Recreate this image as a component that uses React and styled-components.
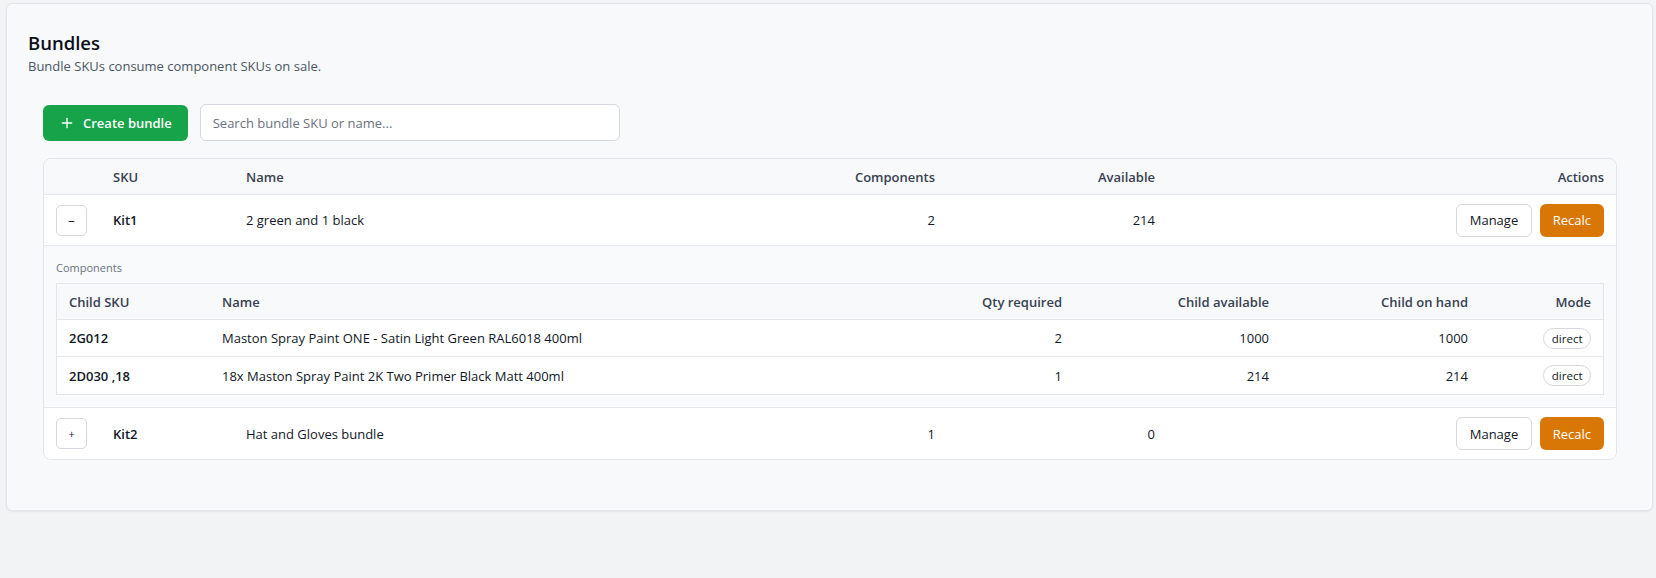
import React from 'react';
import styled, { createGlobalStyle } from 'styled-components';
import { Plus } from 'lucide-react';

const GlobalStyle = createGlobalStyle`
  html, body { margin: 0; padding: 0; background: #f2f3f5; }
  body {
    font-family: "Open Sans", "Noto Sans", sans-serif;
    font-size: 13px;
    color: #111827;
  }
  * { box-sizing: border-box; }
`;

const Page = styled.div`
  padding: 3px 3px 0 6px;
  min-height: 578px;
`;

const Panel = styled.section`
  background: #f8f9fa;
  border: 1px solid #e3e5e9;
  border-radius: 6px;
  padding: 27px 21px 50px;
  box-shadow: 0 1px 2px rgba(0, 0, 0, 0.06);
`;

const Title = styled.h2`
  margin: 0;
  font-size: 18.5px;
  line-height: 24px;
  font-weight: 600;
  color: #0b0f19;
`;

const Subtitle = styled.p`
  margin: 2px 0 0;
  font-size: 13px;
  line-height: 18px;
  color: #4b5563;
`;

const Section = styled.div`
  padding: 0 14px 0 15px;
  margin-top: 29px;
`;

const Toolbar = styled.div`
  display: flex;
  align-items: center;
  gap: 12px;
  height: 37px;
`;

const PrimaryButton = styled.button`
  display: inline-flex;
  align-items: center;
  gap: 8px;
  height: 36px;
  padding: 0 16px;
  border: none;
  border-radius: 6px;
  background: #16a34a;
  color: #fff;
  font-family: inherit;
  font-size: 13px;
  font-weight: 600;
  cursor: pointer;
`;

const SearchInput = styled.input`
  width: 420px;
  height: 37px;
  padding: 0 12px;
  border: 1px solid #d4d7dd;
  border-radius: 6px;
  background: #fff;
  font-family: inherit;
  font-size: 13px;
  color: #111827;
  outline: none;
  &::placeholder { color: #6b7280; }
`;

const TableCard = styled.div`
  margin-top: 17px;
  border: 1px solid #e3e5e9;
  border-radius: 8px;
  background: #fff;
  overflow: hidden;
`;

const MainRow = styled.div`
  display: grid;
  grid-template-columns: 57px 133px minmax(0, 1fr) 160px 220px 449px;
  align-items: center;
  padding: 0 12px;
  height: ${p => (p.$head ? '36px' : '51px')};
  background: ${p => (p.$head ? '#f8f9fa' : '#fff')};
  border-bottom: ${p => (p.$last ? 'none' : '1px solid #e5e7eb')};
`;

const HeadCell = styled.div`
  font-weight: 600;
  color: #374151;
  text-align: ${p => (p.$right ? 'right' : 'left')};
`;

const Cell = styled.div`
  font-weight: ${p => (p.$strong ? 600 : 400)};
  color: #111827;
  text-align: ${p => (p.$right ? 'right' : 'left')};
  white-space: nowrap;
`;

const ToggleButton = styled.button`
  width: 31px;
  height: 31px;
  display: inline-flex;
  align-items: center;
  justify-content: center;
  padding: 0;
  border: 1px solid #d4d7dd;
  border-radius: 5px;
  background: #fff;
  color: #111827;
  font-family: inherit;
  font-size: ${p => (p.$open ? '13px' : '10px')};
  cursor: pointer;
`;

const Actions = styled.div`
  display: flex;
  justify-content: flex-end;
  gap: 8px;
`;

const GhostButton = styled.button`
  height: 33px;
  padding: 0 12.5px;
  border: 1px solid #d4d7dd;
  border-radius: 6px;
  background: #fff;
  color: #111827;
  font-family: inherit;
  font-size: 13px;
  cursor: pointer;
`;

const WarnButton = styled.button`
  height: 33px;
  padding: 0 13px;
  border: none;
  border-radius: 6px;
  background: #d97706;
  color: #fff;
  font-family: inherit;
  font-size: 13px;
  cursor: pointer;
`;

const Expanded = styled.div`
  background: #f9fafb;
  padding: 14px 12px 12px;
  border-bottom: 1px solid #e5e7eb;
`;

const SubLabel = styled.div`
  font-size: 11px;
  line-height: 16px;
  color: #6b7280;
  margin-bottom: 7px;
`;

const ChildTable = styled.div`
  border: 1px solid #e3e5e9;
  background: #fff;
`;

const ChildRow = styled.div`
  display: grid;
  grid-template-columns: 153px minmax(0, 1fr) 180px 207px 199px 123px;
  align-items: center;
  padding: 0 12px;
  height: ${p => (p.$head ? '36px' : '37px')};
  background: ${p => (p.$head ? '#f8f9fa' : '#fff')};
  border-bottom: ${p => (p.$last ? 'none' : '1px solid #e5e7eb')};
`;

const ModeCell = styled.div`
  display: flex;
  justify-content: flex-end;
`;

const Badge = styled.span`
  display: inline-flex;
  align-items: center;
  height: 21px;
  padding: 0 7.5px;
  border: 1px solid #d4d7dd;
  border-radius: 999px;
  background: #fff;
  font-size: 11.5px;
  color: #111827;
`;

const bundles = [
  {
    sku: 'Kit1',
    name: '2 green and 1 black',
    components: 2,
    available: 214,
    open: true,
    children: [
      { sku: '2G012', name: 'Maston Spray Paint ONE - Satin Light Green RAL6018 400ml', qty: 2, avail: 1000, onHand: 1000, mode: 'direct' },
      { sku: '2D030 ,18', name: '18x Maston Spray Paint 2K Two Primer Black Matt 400ml', qty: 1, avail: 214, onHand: 214, mode: 'direct' },
    ],
  },
  {
    sku: 'Kit2',
    name: 'Hat and Gloves bundle',
    components: 1,
    available: 0,
    open: false,
    children: [],
  },
];

export default function App() {
  return (
    <>
      <GlobalStyle />
      <Page>
        <Panel>
          <Title>Bundles</Title>
          <Subtitle>Bundle SKUs consume component SKUs on sale.</Subtitle>
          <Section>
            <Toolbar>
              <PrimaryButton>
                <Plus size={16} strokeWidth={2} />
                Create bundle
              </PrimaryButton>
              <SearchInput placeholder="Search bundle SKU or name..." />
            </Toolbar>
            <TableCard>
              <MainRow $head>
                <HeadCell />
                <HeadCell>SKU</HeadCell>
                <HeadCell>Name</HeadCell>
                <HeadCell $right>Components</HeadCell>
                <HeadCell $right>Available</HeadCell>
                <HeadCell $right>Actions</HeadCell>
              </MainRow>
              {bundles.map((b, i) => (
                <React.Fragment key={b.sku}>
                  <MainRow $last={i === bundles.length - 1}>
                    <div>
                      <ToggleButton $open={b.open}>{b.open ? '–' : '+'}</ToggleButton>
                    </div>
                    <Cell $strong>{b.sku}</Cell>
                    <Cell>{b.name}</Cell>
                    <Cell $right>{b.components}</Cell>
                    <Cell $right>{b.available}</Cell>
                    <Actions>
                      <GhostButton>Manage</GhostButton>
                      <WarnButton>Recalc</WarnButton>
                    </Actions>
                  </MainRow>
                  {b.open && (
                    <Expanded>
                      <SubLabel>Components</SubLabel>
                      <ChildTable>
                        <ChildRow $head>
                          <HeadCell>Child SKU</HeadCell>
                          <HeadCell>Name</HeadCell>
                          <HeadCell $right>Qty required</HeadCell>
                          <HeadCell $right>Child available</HeadCell>
                          <HeadCell $right>Child on hand</HeadCell>
                          <HeadCell $right>Mode</HeadCell>
                        </ChildRow>
                        {b.children.map((c, j) => (
                          <ChildRow key={c.sku} $last={j === b.children.length - 1}>
                            <Cell $strong>{c.sku}</Cell>
                            <Cell>{c.name}</Cell>
                            <Cell $right>{c.qty}</Cell>
                            <Cell $right>{c.avail}</Cell>
                            <Cell $right>{c.onHand}</Cell>
                            <ModeCell>
                              <Badge>{c.mode}</Badge>
                            </ModeCell>
                          </ChildRow>
                        ))}
                      </ChildTable>
                    </Expanded>
                  )}
                </React.Fragment>
              ))}
            </TableCard>
          </Section>
        </Panel>
      </Page>
    </>
  );
}
